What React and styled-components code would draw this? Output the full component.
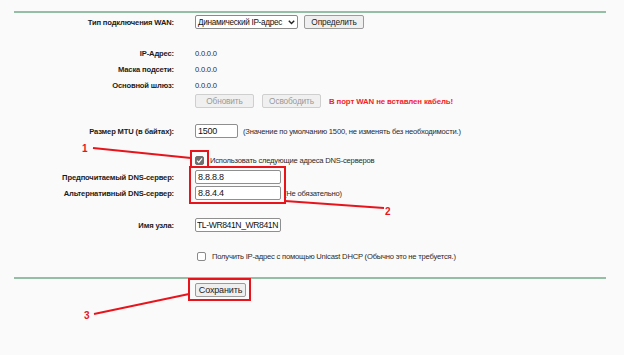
import React from "react";
import styled, { createGlobalStyle } from "styled-components";

const Global = createGlobalStyle`
  html, body {
    margin: 0;
    padding: 0;
    background: #fafafa;
  }
  body {
    font-family: "Liberation Sans", Arial, sans-serif;
    color: #222;
  }
`;

function Chevron() {
  return (
    <svg width="7" height="5" viewBox="0 0 7 5">
      <path d="M0.8 0.8 L3.5 3.6 L6.2 0.8" fill="none" stroke="#222" strokeWidth="1.4" />
    </svg>
  );
}

function Check() {
  return (
    <svg width="7" height="7" viewBox="0 0 7 7">
      <path d="M1 3.6 L2.8 5.4 L6 1.4" fill="none" stroke="#fff" strokeWidth="1.3" />
    </svg>
  );
}

function Annotations() {
  return (
    <St.Overlay width="624" height="355" viewBox="0 0 624 355">
      <g fill="none" stroke="#e8141c" strokeWidth="2">
        <rect x="191" y="151" width="17" height="16" />
        <rect x="190" y="167" width="95" height="36" />
        <rect x="189" y="279" width="61" height="21" />
        <line x1="93" y1="148" x2="191" y2="158" />
        <line x1="285" y1="201" x2="384" y2="208" />
        <line x1="94" y1="314" x2="189" y2="294" />
      </g>
      <g fill="#e8141c" fontFamily="Liberation Sans, Arial, sans-serif" fontWeight="700" fontSize="10">
        <text x="82" y="152">1</text>
        <text x="385" y="215">2</text>
        <text x="84" y="319">3</text>
      </g>
    </St.Overlay>
  );
}

function App() {
  return (
    <St.Page>
      <Global />
      <St.Rule $mt={11} />

      <St.Row $h={18}>
        <St.Label>Тип подключения WAN:</St.Label>
        <St.Value>
          <St.Select>
            <span>Динамический IP-адрес</span>
            <Chevron />
          </St.Select>
          <St.Button $w={60}>Определить</St.Button>
        </St.Value>
      </St.Row>

      <St.Row $mt={14}>
        <St.Label>IP-Адрес:</St.Label>
        <St.Value>0.0.0.0</St.Value>
      </St.Row>
      <St.Row>
        <St.Label>Маска подсети:</St.Label>
        <St.Value>0.0.0.0</St.Value>
      </St.Row>
      <St.Row>
        <St.Label>Основной шлюз:</St.Label>
        <St.Value>0.0.0.0</St.Value>
      </St.Row>
      <St.Row>
        <St.Label />
        <St.Value $gap={8}>
          <St.Button $w={59} disabled>Обновить</St.Button>
          <St.Button $w={59} disabled>Освободить</St.Button>
          <St.Warning>В порт WAN не вставлен кабель!</St.Warning>
        </St.Value>
      </St.Row>

      <St.Row $mt={14}>
        <St.Label>Размер MTU (в байтах):</St.Label>
        <St.Value $gap={5}>
          <St.Input $w={43} value="1500" readOnly />
          <St.Hint>(Значение по умолчанию 1500, не изменять без необходимости.)</St.Hint>
        </St.Value>
      </St.Row>

      <St.Row $mt={13}>
        <St.Label />
        <St.Value $gap={6}>
          <St.Box $checked>
            <Check />
          </St.Box>
          <St.Hint>Использовать следующие адреса DNS-серверов</St.Hint>
        </St.Value>
      </St.Row>
      <St.Row $mt={1}>
        <St.Label>Предпочитаемый DNS-сервер:</St.Label>
        <St.Value>
          <St.Input $w={86} value="8.8.8.8" readOnly />
        </St.Value>
      </St.Row>
      <St.Row>
        <St.Label>Альтернативный DNS-сервер:</St.Label>
        <St.Value $gap={3}>
          <St.Input $w={86} value="8.8.4.4" readOnly />
          <St.Hint>(Не обязательно)</St.Hint>
        </St.Value>
      </St.Row>

      <St.Row $mt={16}>
        <St.Label>Имя узла:</St.Label>
        <St.Value>
          <St.Input $w={86} $tight value="TL-WR841N_WR841N" readOnly />
        </St.Value>
      </St.Row>

      <St.Row $mt={15}>
        <St.Label />
        <St.Value $gap={6} $pl={2}>
          <St.Box />
          <St.Hint>Получить IP-адрес с помощью Unicast DHCP (Обычно это не требуется.)</St.Hint>
        </St.Value>
      </St.Row>

      <St.Rule $mt={13} />

      <St.Row $h={18} $mt={2}>
        <St.Label />
        <St.Value>
          <St.Button $w={51} $big>Сохранить</St.Button>
        </St.Value>
      </St.Row>

      <Annotations />
    </St.Page>
  );
}

export default App;

const St = {
  Page: styled.div`
    position: relative;
    width: 624px;
    height: 355px;
    padding: 0 18px 0 14px;
    box-sizing: border-box;
    overflow: hidden;
  `,
  Rule: styled.div`
    margin-top: ${(p) => p.$mt}px;
    height: 2px;
    background: #94bfa4;
  `,
  Row: styled.div`
    display: flex;
    align-items: center;
    height: ${(p) => p.$h || 16}px;
    margin-top: ${(p) => p.$mt || 0}px;
  `,
  Label: styled.div`
    width: 160px;
    flex: none;
    text-align: right;
    font-size: 7.6px;
    letter-spacing: -0.15px;
    font-weight: 700;
    color: #1a1a1a;
    white-space: nowrap;
  `,
  Value: styled.div`
    display: flex;
    align-items: center;
    gap: ${(p) => p.$gap || 6}px;
    margin-left: 21px;
    padding-left: ${(p) => p.$pl || 0}px;
    font-size: 7.6px;
    letter-spacing: -0.2px;
    color: #2a2a2a;
    white-space: nowrap;
  `,
  Select: styled.div`
    display: flex;
    align-items: center;
    justify-content: space-between;
    width: 103px;
    height: 14px;
    box-sizing: border-box;
    padding: 0 2px 0 2px;
    background: #fff;
    border: 1px solid #8a8a8a;
    border-radius: 2px;
    font-size: 8.2px;
    letter-spacing: -0.3px;
    color: #111;
  `,
  Button: styled.button`
    width: ${(p) => p.$w}px;
    height: 14px;
    padding: 0;
    box-sizing: border-box;
    font-family: "Liberation Sans", Arial, sans-serif;
    font-size: ${(p) => (p.$big ? 9 : 8.3)}px;
    letter-spacing: -0.15px;
    color: ${(p) => (p.disabled ? "#9a9a9a" : "#222")};
    background: ${(p) => (p.disabled ? "#f0f0f0" : "#efefef")};
    border: 1px solid ${(p) => (p.disabled ? "#cfcfcf" : "#9b9b9b")};
    border-radius: 2px;
  `,
  Warning: styled.span`
    font-size: 7.8px;
    letter-spacing: -0.1px;
    font-weight: 700;
    color: #f0232b;
  `,
  Input: styled.input`
    width: ${(p) => p.$w}px;
    height: 14px;
    box-sizing: border-box;
    padding: 0 ${(p) => (p.$tight ? 1 : 2)}px;
    font-family: "Liberation Sans", Arial, sans-serif;
    font-size: ${(p) => (p.$tight ? 8.6 : 9)}px;
    letter-spacing: ${(p) => (p.$tight ? -0.4 : -0.25)}px;
    color: #111;
    background: #fff;
    border: 1px solid #8f8f8f;
    border-radius: 2px;
    outline: none;
  `,
  Hint: styled.span`
    font-size: 7.6px;
    letter-spacing: -0.2px;
    color: #2a2a2a;
  `,
  Box: styled.span`
    display: inline-flex;
    align-items: center;
    justify-content: center;
    width: 9px;
    height: 9px;
    box-sizing: border-box;
    border-radius: 2px;
    background: ${(p) => (p.$checked ? "#6f6f6f" : "#fff")};
    border: 1px solid ${(p) => (p.$checked ? "#6f6f6f" : "#8a8a8a")};
  `,
  Overlay: styled.svg`
    position: absolute;
    left: 0;
    top: 0;
    pointer-events: none;
  `,
};
